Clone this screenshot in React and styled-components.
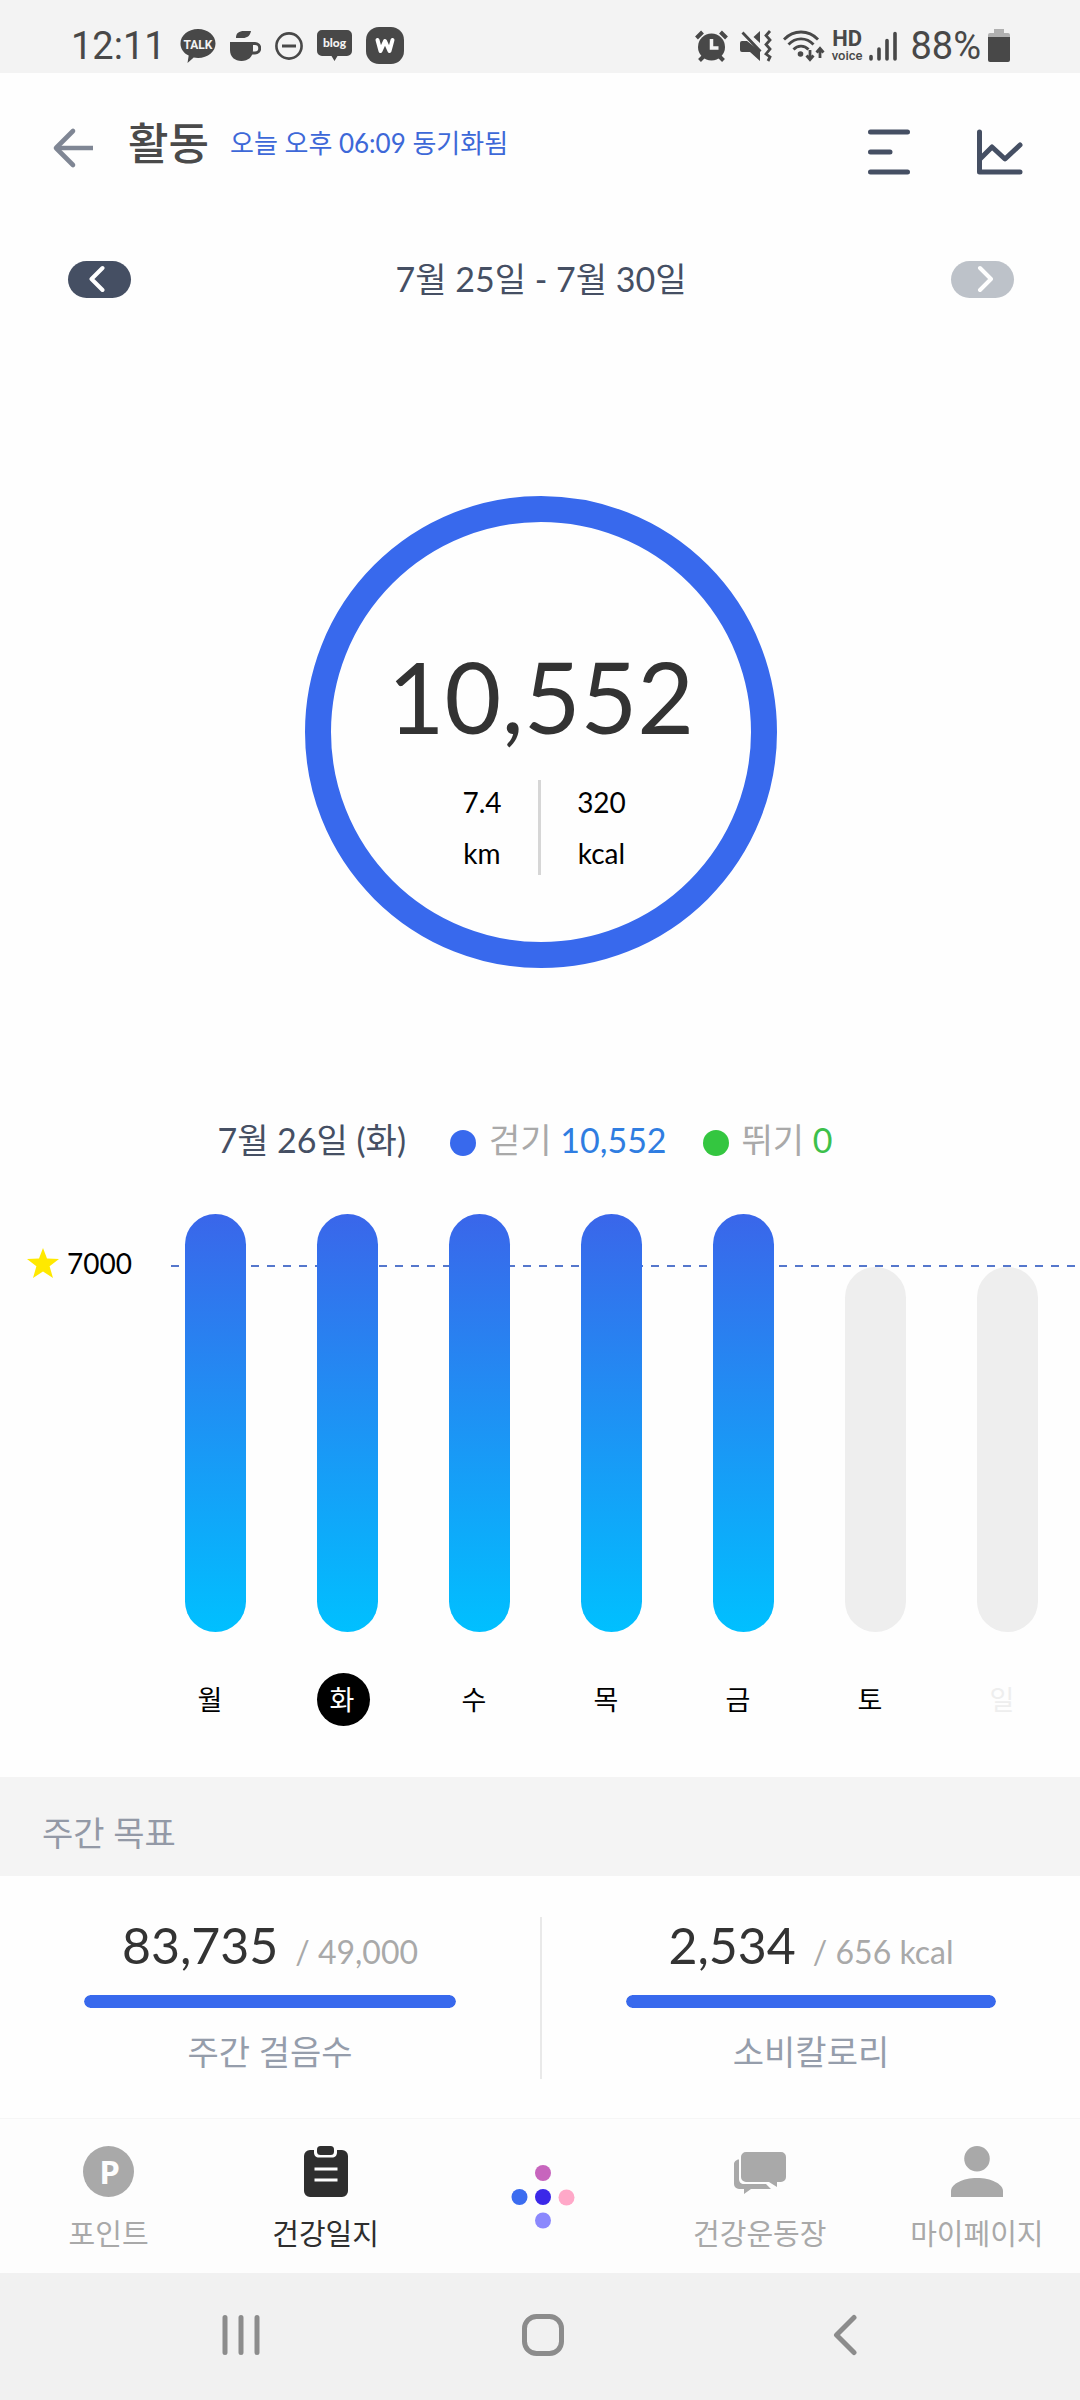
import React from 'react';
import styled, { createGlobalStyle } from 'styled-components';

const sans = 'Lato, "Noto Sans CJK KR", sans-serif';
const system = 'Roboto, "Noto Sans CJK KR", sans-serif';

const color = {
  page: '#fefefe',
  ink: '#333333',
  slate: '#454f63',
  slateSoft: '#9399a6',
  gray: '#a9a9a9',
  blue: '#3869ed',
  green: '#34c640',
  status: '#484848',
};

const GlobalStyle = createGlobalStyle`
  *, *::before, *::after { box-sizing: border-box; }
  body { margin: 0; background: ${color.page}; font-family: ${sans}; }
  button { margin: 0; padding: 0; border: 0; background: none; color: inherit; font: inherit; cursor: pointer; }
  h1, h2, p { margin: 0; font-weight: 400; }
  svg { display: block; flex: none; }
`;

const Screen = styled.div`
  display: flex;
  flex-direction: column;
  min-height: 100vh;
  overflow-x: hidden;
  background: ${color.page};
`;

/* ---------- system status bar ---------- */

const StatusBar = styled.div`
  display: flex;
  justify-content: space-between;
  height: 73px;
  padding: 18px 70px 0 71px;
  background: #f3f3f3;
  color: ${color.status};
  font-family: ${system};
`;

const StatusGroup = styled.div`
  display: flex;
  align-items: center;
  height: 55px;
  gap: ${(p) => p.$gap}px;
`;

const StatusText = styled.span`
  font-size: 38px;
  line-height: 56px;
`;

const HdVoice = styled.span`
  display: flex;
  flex-direction: column;
  align-items: center;
  font-size: 13px;
  line-height: 14px;
  font-weight: 500;
`;

const Hd = styled.b`
  font-size: 22px;
  line-height: 20px;
`;

/* ---------- header ---------- */

const Header = styled.header`
  display: flex;
  align-items: center;
  height: 150px;
  padding: 0 57px 0 52px;
`;

const HeaderTitles = styled.div`
  display: flex;
  align-items: center;
  flex: 1;
  gap: 21px;
  padding: 0 0 10px 34px;
`;

const Title = styled.h1`
  font-size: 44px;
  line-height: 56px;
  font-weight: 500;
  color: #4a4a4a;
`;

const SyncText = styled.p`
  font-size: 26px;
  line-height: 40px;
  color: #3d68d8;
`;

const HeaderActions = styled.div`
  display: flex;
  gap: 65px;
  padding-top: 8px;
`;

const WeekNav = styled.nav`
  display: flex;
  align-items: center;
  justify-content: space-between;
  height: 112px;
  padding: 0 66px 0 68px;
`;

const WeekButton = styled.button`
  display: flex;
  align-items: center;
  justify-content: center;
  width: 63px;
  height: 37px;
  border-radius: 19px;
  background: ${(p) => (p.disabled ? '#bdc2c9' : color.slate)};
`;

const WeekLabel = styled.h2`
  font-size: 34px;
  line-height: 48px;
  color: ${color.slate};
`;

/* ---------- ring ---------- */

const RingArea = styled.section`
  display: flex;
  justify-content: center;
  padding: 161px 0 137px 2px;
`;

const Ring = styled.div`
  display: flex;
  flex-direction: column;
  align-items: center;
  width: 472px;
  height: 472px;
  padding-top: 114px;
  border: 26px solid ${color.blue};
  border-radius: 50%;
`;

const Steps = styled.p`
  font-size: 98px;
  line-height: 120px;
  color: ${color.ink};
`;

const Metrics = styled.div`
  display: flex;
  margin-top: 24px;
  padding-right: 6px;
`;

const Metric = styled.p`
  display: flex;
  flex-direction: column;
  align-items: center;
  justify-content: center;
  width: 118px;
  height: 95px;
  padding-left: 6px;
  font-size: 28px;
  line-height: 51px;
  color: #000;

  & + & {
    border-left: 3px solid #d6d6d6;
  }
`;

/* ---------- legend and chart ---------- */

const Legend = styled.div`
  display: flex;
  align-items: center;
  justify-content: center;
  gap: 36px;
  padding-right: 30px;
  font-size: 34px;
  line-height: 70px;
  color: ${color.slate};
`;

const LegendDate = styled.span`
  margin-right: 8px;
`;

const LegendItem = styled.span`
  display: flex;
  align-items: center;
  gap: 13px;
  color: ${color.gray};
`;

const Dot = styled.i`
  width: 26px;
  height: 26px;
  margin-top: 6px;
  border-radius: 50%;
  background: ${(p) => p.$color};
`;

const LegendText = styled.span`
  white-space: pre;
`;

const LegendValue = styled.span`
  color: ${(p) => p.$color};
`;

const Chart = styled.section`
  display: flex;
  padding-top: 38px;
`;

const Goal = styled.p`
  display: flex;
  align-items: center;
  gap: 8px;
  width: 171px;
  height: 100px;
  padding-left: 27px;
  font-size: 28px;
  color: #000;
`;

const Plot = styled.div`
  display: flex;
  flex: 1;
  justify-content: space-between;
  padding: 0 42px 51px 14px;
  background: repeating-linear-gradient(90deg, #5577cc 0 8px, transparent 8px 16px) 0 52px / 100% 2px no-repeat;
`;

const Day = styled.button`
  display: flex;
  flex-direction: column;
  justify-content: flex-end;
  width: 61px;
  height: 513px;
`;

const Bar = styled.span`
  width: 61px;
  height: ${(p) => p.$height}px;
  border-radius: 31px;
  background: ${(p) => (p.$filled ? 'linear-gradient(#3a66ea, #00c0ff)' : '#eeeeee')};
`;

const DayName = styled.span`
  width: 53px;
  height: 53px;
  margin-top: 41px;
  padding-right: 3px;
  border-radius: 50%;
  font-size: 27px;
  line-height: 54px;
  text-align: center;
  color: ${(p) => (p.$selected ? '#fff' : p.$future ? '#eeeeee' : '#000')};
  background: ${(p) => (p.$selected ? '#000' : 'transparent')};
`;

/* ---------- weekly goals ---------- */

const SectionTitle = styled.h2`
  padding: 27px 42px 15px;
  background: #f4f4f4;
  font-size: 34px;
  line-height: 57px;
  color: ${color.slateSoft};
`;

const Goals = styled.section`
  display: grid;
  grid-template-columns: 1fr 1fr;
  padding: 41px 0 39px;
`;

const GoalCard = styled.div`
  display: flex;
  flex-direction: column;
  align-items: center;
  height: 162px;
  padding: 0 84px;

  & + & {
    border-left: 2px solid #e9e9e9;
  }
`;

const GoalFigures = styled.p`
  display: flex;
  align-items: baseline;
  gap: 17px;
  height: 56px;
  font-size: 50px;
  line-height: 56px;
  color: ${color.ink};
`;

const GoalTarget = styled.span`
  font-size: 32px;
  color: ${color.gray};
`;

const Track = styled.div`
  flex: none;
  width: 100%;
  height: 13px;
  margin: 22px 0 17px;
  border-radius: 7px;
  overflow: hidden;
  background: #eeeeee;
`;

const Fill = styled.div`
  height: 100%;
  border-radius: 7px;
  background: ${color.blue};
`;

const GoalName = styled.p`
  font-size: 34px;
  line-height: 54px;
  color: #959dab;
`;

/* ---------- bottom bars ---------- */

const TabBar = styled.nav`
  display: grid;
  grid-template-columns: repeat(5, 20.1%);
  height: 155px;
  border-top: 1px solid #f6f6f6;
  background: #fdfdfd;
`;

const Tab = styled.a`
  display: flex;
  flex-direction: column;
  align-items: center;
  gap: 15px;
  padding-top: 27px;
  color: ${(p) => (p.$active ? '#2e2e2e' : color.gray)};
  font-size: 29px;
  line-height: 44px;
  text-decoration: none;
`;

const HomeTab = styled(Tab)`
  padding-top: 46px;
`;

const SystemBar = styled.div`
  display: grid;
  grid-template-columns: repeat(3, 1fr);
  flex: 1;
  min-height: 126px;
  padding: 0 84px 3px 90px;
  background: #f1f1f1;
`;

const SystemButton = styled.button`
  display: flex;
  align-items: center;
  justify-content: center;
`;

/* ---------- icons ---------- */

const TalkIcon = () => (
  <svg width="36" height="34" viewBox="0 0 36 34" aria-hidden="true">
    <path fill={color.status} d="M18 0c10 0 17.500 6.500 17.500 14.500S28 29 18 29c-1.500 0-3-.1-4.300-.4L7.500 34l1.200-7.500C3.500 24.200.5 19.700.5 14.500.5 6.500 8 0 18 0z" />
    <text x="18" y="19.500" textAnchor="middle" fontFamily="Roboto, sans-serif" fontWeight="700" fontSize="12" fill="#f3f3f3">TALK</text>
  </svg>
);

const CupIcon = () => (
  <svg width="31" height="32" viewBox="0 0 31 32" aria-hidden="true">
    <path fill={color.status} d="M0 12h23v8c0 7-5 11-11.500 11S0 27 0 20zM6 8c0-5 3-7 8-7h7c-1 5-4 7-8 7z" />
    <path fill="none" stroke={color.status} strokeWidth="3" d="M22 13.500h3a4.500 4.500 0 0 1 0 9.500h-3" />
  </svg>
);

const MinusIcon = () => (
  <svg width="28" height="30" viewBox="0 0 28 30" aria-hidden="true">
    <g fill="none" stroke={color.status} strokeWidth="2.600">
      <circle cx="14" cy="15" r="12.600" />
      <path strokeWidth="3" d="M7 15h14" />
    </g>
  </svg>
);

const BlogIcon = () => (
  <svg width="35" height="31" viewBox="0 0 35 31" aria-hidden="true">
    <path fill={color.status} d="M5 0h25a5 5 0 0 1 5 5v16a5 5 0 0 1-5 5h-9.500l-3 5-3-5H5a5 5 0 0 1-5-5V5a5 5 0 0 1 5-5z" />
    <text x="17.500" y="16.500" textAnchor="middle" fontFamily="Lato, sans-serif" fontWeight="900" fontSize="12" fill="#f3f3f3">blog</text>
  </svg>
);

const WIcon = () => (
  <svg width="38" height="37" viewBox="0 0 38 37" aria-hidden="true">
    <rect width="38" height="37" rx="13" fill={color.status} />
    <path fill="none" stroke="#fff" strokeWidth="4" strokeLinecap="round" strokeLinejoin="round" d="M11.500 13l3 11 4.500-10 4.500 10 3-11" />
  </svg>
);

const AlarmIcon = () => (
  <svg width="38" height="32" viewBox="0 0 38 32" aria-hidden="true">
    <circle cx="16.500" cy="17" r="13.500" fill={color.status} />
    <g fill="none" stroke={color.status} strokeWidth="4">
      <path d="M1.500 8l6-6M31.500 8l-6-6M4.500 30.500l4-4M28.500 30.500l-4-4" />
    </g>
    <path fill="none" stroke="#f3f3f3" strokeWidth="3.500" d="M16.500 9v9h7" />
  </svg>
);

const MuteIcon = () => (
  <svg width="36" height="32" viewBox="0 0 36 32" aria-hidden="true">
    <path fill={color.status} d="M0 13a2 2 0 0 1 2-2h5l13 10v10l-10-9H2a2 2 0 0 1-2-2zM13.500 7l6.500-6v12z" />
    <path fill="none" stroke={color.status} strokeWidth="2.800" d="M2.500 2.500l18 19M30 1l-4 4.500 4 4.500-4 4.500 4 4.500-4 5 4 3-2 4" />
  </svg>
);

const WifiIcon = () => (
  <svg width="42" height="32" viewBox="0 0 42 32" aria-hidden="true">
    <g fill="none" stroke={color.status} strokeWidth="2.800">
      <path d="M1 9.500c9.500-10 24.500-10 34 0M5.500 14.500c7-7.500 18-7.500 25 0M10.500 19.500c4-4.500 11-4.500 15 0" />
      <path d="M27 20v9M23.500 25.500l3.500 4 3.500-4M37 28v-9M33.500 22.500l3.500-4 3.500 4" />
    </g>
    <circle cx="17.500" cy="24" r="2.800" fill={color.status} />
  </svg>
);

const SignalIcon = () => (
  <svg width="34" height="30" viewBox="0 0 34 30" aria-hidden="true">
    <path stroke={color.status} strokeWidth="3.600" strokeLinecap="round" d="M2 25.500v2.500M10 18v10M18 9.500V28M26 2.500V28" />
  </svg>
);

const BatteryIcon = () => (
  <svg width="22" height="33" viewBox="0 0 22 33" aria-hidden="true">
    <path fill="#b0b0b0" d="M6 0h10v4h4a2 2 0 0 1 2 2v2H0V6a2 2 0 0 1 2-2h4z" />
    <path fill={color.status} d="M0 8h22v23a2 2 0 0 1-2 2H2a2 2 0 0 1-2-2z" />
  </svg>
);

const BackArrow = () => (
  <svg width="42" height="42" viewBox="0 0 42 42" aria-hidden="true">
    <path fill="none" stroke="#7f8694" strokeWidth="4.600" strokeLinejoin="round" d="M41 21H4" />
    <path fill="none" stroke="#7f8694" strokeWidth="4.600" strokeLinecap="round" strokeLinejoin="round" d="M21 4L4 21l17 17" />
  </svg>
);

const ListIcon = () => (
  <svg width="44" height="46" viewBox="0 0 44 46" aria-hidden="true">
    <path stroke={color.slate} strokeWidth="5" strokeLinecap="round" d="M3.500 3h37M3.500 23h19.500M3.500 43h37" />
  </svg>
);

const GraphIcon = () => (
  <svg width="47" height="46" viewBox="0 0 47 46" aria-hidden="true">
    <path fill="none" stroke={color.slate} strokeWidth="5" strokeLinecap="round" strokeLinejoin="round" d="M3.500 3v40H44M4 30l12-12 13 12 15-14" />
  </svg>
);

const Chevron = ({ left }) => (
  <svg width="22" height="28" viewBox="0 0 22 28" aria-hidden="true">
    <path fill="none" stroke="#fff" strokeWidth="4" strokeLinecap="round" strokeLinejoin="round" d={left ? 'M13.500 3L2.500 14l11 11' : 'M9 3l11 11L9 25'} />
  </svg>
);

const StarIcon = () => (
  <svg width="32" height="30" viewBox="0 0 32 30" aria-hidden="true">
    <path fill="#ffe900" d="M16 0l4 10.600 12 .5-9.400 7.200L26 30l-10-6.500L6 30l3.400-11.700L0 11.100l12-.5z" />
  </svg>
);

const PointIcon = () => (
  <svg width="51" height="51" viewBox="0 0 51 51" aria-hidden="true">
    <circle cx="25.500" cy="25.500" r="25.500" fill="currentColor" />
    <text x="26.500" y="38" textAnchor="middle" fontFamily="'Open Sans', sans-serif" fontWeight="700" fontSize="33" fill="#fdfdfd">P</text>
  </svg>
);

const DiaryIcon = () => (
  <svg width="44" height="51" viewBox="0 0 44 51" aria-hidden="true">
    <path fill="currentColor" d="M6 4h4v2.500c0 3 2 5 5 5h13c3 0 5-2 5-5V4h5a6 6 0 0 1 6 6v35a6 6 0 0 1-6 6H6a6 6 0 0 1-6-6V10a6 6 0 0 1 6-6z" />
    <rect x="13" width="17" height="9" rx="3.500" fill="currentColor" />
    <path stroke="#fdfdfd" strokeWidth="3" d="M10.500 23h23M10.500 34h23" />
  </svg>
);

const HomeDots = () => (
  <svg width="64" height="64" viewBox="0 0 64 64" aria-hidden="true">
    <circle cx="32" cy="8" r="8" fill="#c765bd" />
    <circle cx="8.500" cy="32" r="8" fill="#3b6cf0" />
    <circle cx="32" cy="32" r="8" fill="#3b28e8" />
    <circle cx="55.500" cy="32.500" r="8" fill="#ffa8c8" />
    <circle cx="32" cy="55.500" r="8" fill="#8b88fd" />
  </svg>
);

const ChatIcon = () => (
  <svg width="52" height="51" viewBox="0 0 52 51" aria-hidden="true">
    <path fill="currentColor" d="M12 6h35a5 5 0 0 1 5 5v20a5 5 0 0 1-5 5h-4v5l-8-5H12a5 5 0 0 1-5-5V11a5 5 0 0 1 5-5z" />
    <path fill="currentColor" d="M5 13.500V33c0 3 2 5 5 5h22l5 5H17l-7 5v-5H5a5 5 0 0 1-5-5V18c0-2 2-4.500 5-4.500z" />
  </svg>
);

const PersonIcon = () => (
  <svg width="52" height="51" viewBox="0 0 52 51" aria-hidden="true">
    <circle cx="26" cy="12.800" r="12.800" fill="currentColor" />
    <path fill="currentColor" d="M0 51v-6c0-7 12-13 26-13s26 6 26 13v6z" />
  </svg>
);

const RecentsIcon = () => (
  <svg width="38" height="42" viewBox="0 0 38 42" aria-hidden="true">
    <path stroke="#8c8c8c" strokeWidth="5" strokeLinecap="round" d="M3 3.500v35M19 3.500v35M35 3.500v35" />
  </svg>
);

const HomeIcon = () => (
  <svg width="42" height="42" viewBox="0 0 42 42" aria-hidden="true">
    <rect x="2.500" y="2.500" width="37" height="37" rx="12" fill="none" stroke="#8c8c8c" strokeWidth="5" />
  </svg>
);

const SystemBackIcon = () => (
  <svg width="24" height="42" viewBox="0 0 24 42" aria-hidden="true">
    <path fill="none" stroke="#8c8c8c" strokeWidth="5" strokeLinecap="round" strokeLinejoin="round" d="M21 3.500L3.500 21 21 38.500" />
  </svg>
);

/* ---------- data ---------- */

const days = [
  { name: '월', height: 418, filled: true },
  { name: '화', height: 418, filled: true, selected: true },
  { name: '수', height: 418, filled: true },
  { name: '목', height: 418, filled: true },
  { name: '금', height: 418, filled: true },
  { name: '토', height: 365 },
  { name: '일', height: 365, future: true },
];

const goals = [
  { name: '주간 걸음수', value: 83735, target: 49000, unit: '' },
  { name: '소비칼로리', value: 2534, target: 656, unit: ' kcal' },
];

const number = (n) => n.toLocaleString('en-US');

export default function App() {
  return (
    <>
      <GlobalStyle />
      <Screen>
        <StatusBar>
          <StatusGroup $gap={14}>
            <StatusText>12:11</StatusText>
            <TalkIcon />
            <CupIcon />
            <MinusIcon />
            <BlogIcon />
            <WIcon />
          </StatusGroup>
          <StatusGroup $gap={7}>
            <AlarmIcon />
            <MuteIcon />
            <WifiIcon />
            <HdVoice>
              <Hd>HD</Hd>
              <span>voice</span>
            </HdVoice>
            <SignalIcon />
            <StatusText>88%</StatusText>
            <BatteryIcon />
          </StatusGroup>
        </StatusBar>

        <Header>
          <button aria-label="뒤로"><BackArrow /></button>
          <HeaderTitles>
            <Title>활동</Title>
            <SyncText>오늘 오후 06:09 동기화됨</SyncText>
          </HeaderTitles>
          <HeaderActions>
            <button aria-label="목록"><ListIcon /></button>
            <button aria-label="그래프"><GraphIcon /></button>
          </HeaderActions>
        </Header>

        <WeekNav>
          <WeekButton aria-label="이전 주"><Chevron left /></WeekButton>
          <WeekLabel>7월 25일 - 7월 30일</WeekLabel>
          <WeekButton aria-label="다음 주" disabled><Chevron /></WeekButton>
        </WeekNav>

        <RingArea>
          <Ring>
            <Steps>10,552</Steps>
            <Metrics>
              <Metric><span>7.4</span><span>km</span></Metric>
              <Metric><span>320</span><span>kcal</span></Metric>
            </Metrics>
          </Ring>
        </RingArea>

        <Legend>
          <LegendDate>7월 26일 (화)</LegendDate>
          <LegendItem>
            <Dot $color={color.blue} />
            <LegendText>걷기 <LegendValue $color="#2f7de1">10,552</LegendValue></LegendText>
          </LegendItem>
          <LegendItem>
            <Dot $color={color.green} />
            <LegendText>뛰기 <LegendValue $color="#3cc04b">0</LegendValue></LegendText>
          </LegendItem>
        </Legend>

        <Chart>
          <Goal><StarIcon />7000</Goal>
          <Plot>
            {days.map((d) => (
              <Day key={d.name}>
                <Bar $height={d.height} $filled={d.filled} />
                <DayName $selected={d.selected} $future={d.future}>{d.name}</DayName>
              </Day>
            ))}
          </Plot>
        </Chart>

        <SectionTitle>주간 목표</SectionTitle>
        <Goals>
          {goals.map((g) => (
            <GoalCard key={g.name}>
              <GoalFigures>
                {number(g.value)}
                <GoalTarget>/ {number(g.target)}{g.unit}</GoalTarget>
              </GoalFigures>
              <Track role="progressbar" aria-label={g.name} aria-valuemin={0} aria-valuemax={g.target} aria-valuenow={Math.min(g.value, g.target)}>
                <Fill style={{ width: `${Math.min(100, (g.value / g.target) * 100)}%` }} />
              </Track>
              <GoalName>{g.name}</GoalName>
            </GoalCard>
          ))}
        </Goals>

        <TabBar>
          <Tab href="#point"><PointIcon />포인트</Tab>
          <Tab href="#diary" $active><DiaryIcon />건강일지</Tab>
          <HomeTab href="#home" aria-label="홈"><HomeDots /></HomeTab>
          <Tab href="#playground"><ChatIcon />건강운동장</Tab>
          <Tab href="#mypage"><PersonIcon />마이페이지</Tab>
        </TabBar>

        <SystemBar>
          <SystemButton aria-label="최근 앱"><RecentsIcon /></SystemButton>
          <SystemButton aria-label="홈 화면"><HomeIcon /></SystemButton>
          <SystemButton aria-label="이전"><SystemBackIcon /></SystemButton>
        </SystemBar>
      </Screen>
    </>
  );
}
